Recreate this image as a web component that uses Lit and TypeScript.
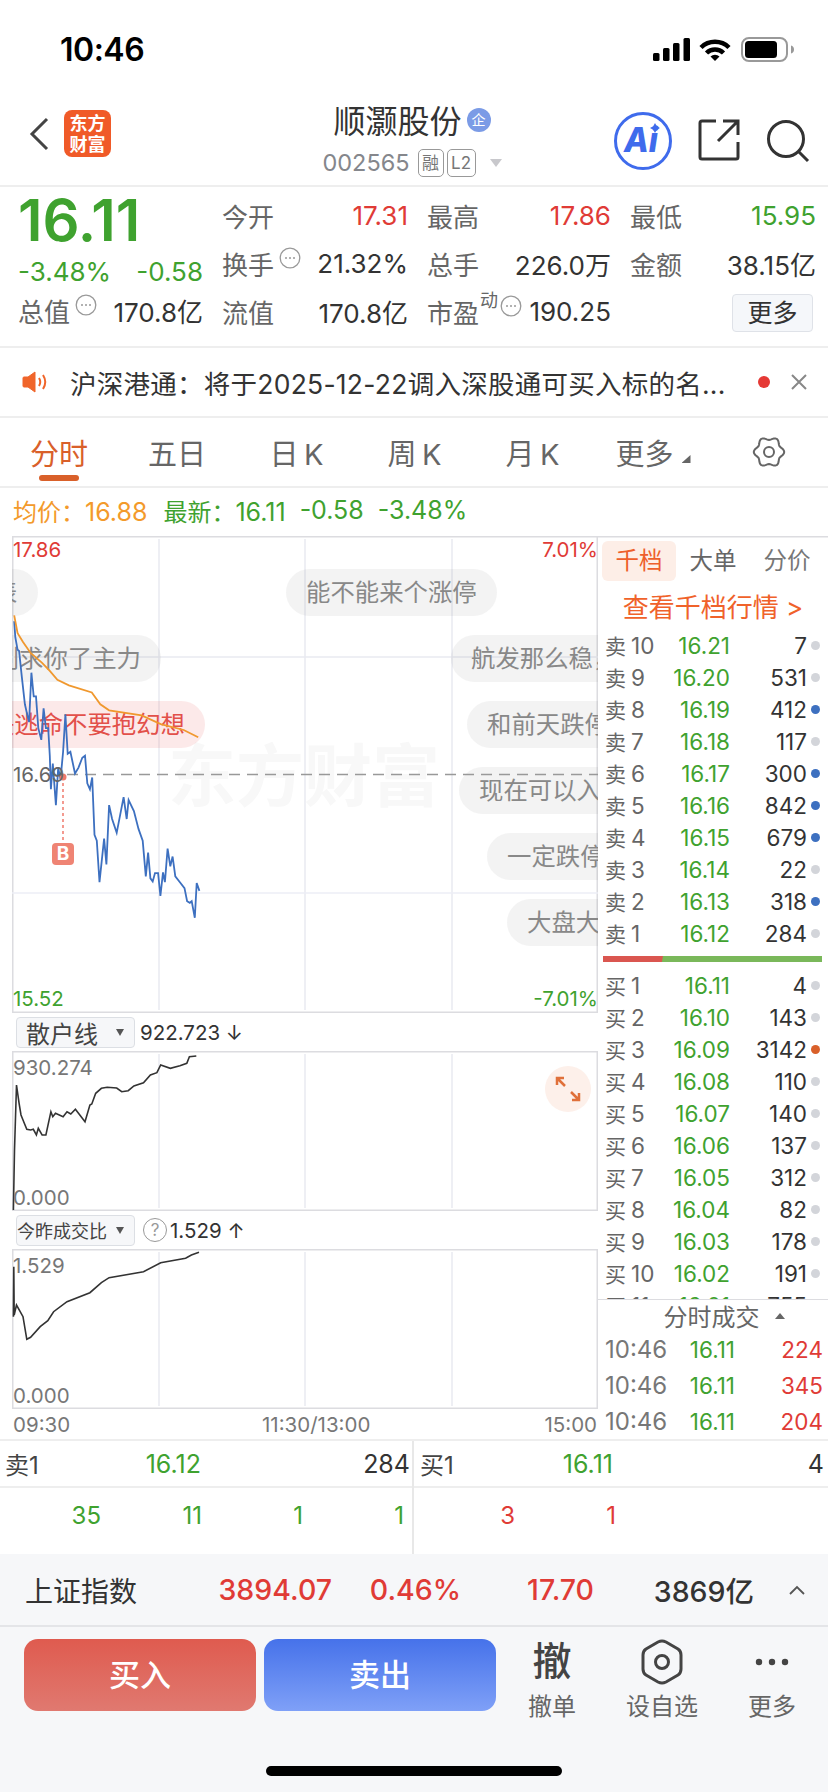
import { LitElement, html, css, svg } from 'lit';
import { customElement } from 'lit/decorators.js';

type Pt = [number, number];

// traced from the reference, in page pixels once mapped
const toPoints = (pts: Pt[], sx: number, sy: number, ox: number, oy: number) =>
  pts.map(([x, y]) => `${(x / sx - ox).toFixed(1)},${(y / sy - oy).toFixed(1)}`).join(' ');

const PRICE: Pt[] = [[37,560],[40,600],[46,632],[50,635],[57,700],[65,770],[72,800],[76,815],[82,690],[88,750],[94,750],[100,830],[108,860],[114,780],[120,830],[126,830],[130,900],[133,985],[138,920],[146,1025],[152,930],[158,960],[165,890],[171,795],[177,895],[184,890],[196,945],[205,930],[215,905],[222,900],[228,970],[235,985],[241,955],[247,1100],[253,1115],[260,1220],[272,1110],[278,1175],[285,1025],[293,1060],[305,1095],[323,1005],[331,1060],[336,1012],[350,1040],[362,1085],[373,1115],[381,1205],[387,1145],[393,1210],[399,1218],[405,1197],[413,1197],[419,1255],[426,1195],[431,1220],[438,1135],[445,1180],[451,1155],[458,1205],[470,1220],[482,1235],[489,1268],[496,1272],[501,1268],[509,1310],[514,1222],[521,1242]];
const AVG: Pt[] = [[37,545],[46,590],[60,612],[80,640],[110,665],[130,685],[150,708],[180,722],[240,740],[262,770],[285,785],[370,798],[420,820],[480,835],[518,853]];
const RETAIL: Pt[] = [[35,630],[38,450],[43,255],[50,310],[55,345],[62,365],[70,388],[80,390],[87,388],[95,405],[100,385],[110,405],[120,405],[133,335],[138,350],[145,340],[165,350],[175,335],[185,342],[197,328],[222,365],[235,315],[240,312],[250,280],[265,265],[280,262],[305,264],[318,275],[335,272],[350,258],[375,248],[393,225],[410,218],[420,195],[445,205],[470,197],[488,190],[495,170],[513,168]];
const RATIO: Pt[] = [[35,950],[36,800],[37,945],[43,915],[60,950],[70,1018],[80,1012],[105,980],[125,962],[140,935],[175,905],[235,878],[265,848],[285,833],[375,815],[420,788],[485,775],[500,765],[520,757]];

const SELL = [['10','16.21','7','g'],['9','16.20','531','g'],['8','16.19','412','b'],['7','16.18','117','g'],['6','16.17','300','b'],['5','16.16','842','b'],['4','16.15','679','b'],['3','16.14','22','g'],['2','16.13','318','b'],['1','16.12','284','g']];
const BUY = [['1','16.11','4','g'],['2','16.10','143','g'],['3','16.09','3142','o'],['4','16.08','110','g'],['5','16.07','140','g'],['6','16.06','137','g'],['7','16.05','312','g'],['8','16.04','82','g'],['9','16.03','178','g'],['10','16.02','191','g'],['11','16.01','755','g']];

// x is the left edge (or right edge with r) and y the top, relative to the chart box
const BUBBLES = [
  { t: '表', r: 25.5, y: 33 },
  { t: '能不能来个涨停', x: 274, y: 33 },
  { t: '别求你了主力', r: 149, y: 99 },
  { t: '航发那么稳，涨停吧', x: 439, y: 99 },
  { t: '快逃命不要抱幻想', r: 193, y: 165, hot: true },
  { t: '和前天跌停一样', x: 455, y: 165 },
  { t: '现在可以入手吗', x: 447, y: 231 },
  { t: '一定跌停的', x: 475, y: 297 },
  { t: '大盘大跌', x: 495, y: 363 },
];

const gearPath = () => {
  const p: string[] = [];
  for (let i = 0; i < 72; i++) {
    const a = (i / 72) * Math.PI * 2;
    const r = 13.6 + 1.6 * Math.cos(6 * a);
    p.push(`${(17 + r * Math.cos(a)).toFixed(2)},${(17 + r * Math.sin(a)).toFixed(2)}`);
  }
  return p.join(' ');
};

@customElement('app-root')
export class AppRoot extends LitElement {
  static styles = css`
    :host {
      display: block;
      width: 828px;
      height: 1792px;
      background: #fff;
      color: #333;
      font-family: Inter, 'Noto Sans CJK SC', sans-serif;
      overflow: hidden;
    }
    .page { display: flex; flex-direction: column; height: 1792px; }
    svg { display: block; flex: none; }

    .status { height: 82px; flex: none; display: flex; justify-content: space-between; padding: 36px 34px 0 60px; box-sizing: border-box; }
    .clock { font-weight: 600; font-size: 32px; line-height: 26px; margin-top: 1px; color: #000; letter-spacing: -0.5px; }

    .header { height: 103px; flex: none; display: grid; grid-template-columns: 262px 300px 1fr; border-bottom: 2px solid #eee; }
    .head-left { display: flex; align-items: center; padding: 0 0 0 29px; gap: 15px; }
    .logo { width: 47px; height: 47px; border-radius: 8px; background: #f05a28; color: #fff; font-weight: 700; font-size: 18px; line-height: 21px; text-align: center; display: flex; align-items: center; justify-content: center; }
    .head-mid { display: flex; flex-direction: column; align-items: center; padding-top: 17px; }
    .title { display: flex; align-items: center; gap: 5px; font-size: 32px; line-height: 46px; height: 46px; color: #333; }
    .qi { width: 24px; height: 24px; border-radius: 50%; background: #7b9be6; color: #fff; font-size: 14px; line-height: 24px; text-align: center; margin-bottom: 4px; }
    .code { display: flex; align-items: center; margin-top: 3px; color: #85878c; font-size: 23.5px; line-height: 30px; }
    .tag { border: 1px solid #999; border-radius: 5px; height: 28px; box-sizing: border-box; font-size: 17px; line-height: 26px; text-align: center; color: #777; }
    .tag.rong { width: 26px; margin-left: 8px; }
    .tag.l2 { width: 29px; margin-left: 3px; }
    .caret { width: 0; height: 0; border: 6.5px solid transparent; border-top: 8px solid #c8c8cc; border-bottom: 0; margin-left: 14px; }
    .head-right { display: flex; align-items: flex-start; padding: 29px 0 0 51px; }

    .quote { height: 159px; flex: none; display: flex; border-bottom: 2px solid #eee; }
    .q-left { width: 222px; padding-left: 18px; box-sizing: border-box; flex: none; }
    .big { font-size: 58px; line-height: 66px; height: 66px; font-weight: 600; color: #3fa22f; }
    .chg { display: flex; justify-content: space-between; width: 185px; height: 38px; line-height: 38px; font-size: 26px; color: #3fa22f; }
    .cap { width: 185px; height: 38px; }
    .q-grid { display: grid; grid-template-columns: 186px 184px 186px; column-gap: 19px; grid-auto-rows: 48px; padding-top: 4px; }
    .cell { display: flex; align-items: center; justify-content: space-between; font-size: 26px; white-space: nowrap; }
    .lbl { display: flex; align-items: center; font-size: 26px; color: #666; }
    .lbl svg { margin: -10px 0 0 5px; }
    .lbl sup { font-size: 18px; line-height: 18px; margin: -20px -3px 0 1px; }
    .red { color: #e03b36; }
    .green { color: #3fa22f; }
    .more-btn { margin: 4px 3px 0 auto; width: 81px; height: 38px; box-sizing: border-box; background: #f5f7fa; border: 1px solid #dfe2e8; border-radius: 4px; font-size: 25px; line-height: 36px; text-align: center; color: #333; }

    .notice { height: 68px; flex: none; display: flex; align-items: center; padding: 0 20px 0 22px; border-bottom: 2px solid #eee; }
    .notice-text { margin-left: 22px; font-size: 26.5px; letter-spacing: 0.25px; white-space: nowrap; color: #333; }
    .notice-dot { width: 12px; height: 12px; border-radius: 50%; background: #e53935; margin-left: auto; flex: none; }
    .notice svg { margin-left: 20px; }

    .tabs { height: 68px; flex: none; display: grid; grid-template-columns: repeat(7, 118px); border-bottom: 2px solid #eee; }
    .tab { position: relative; display: flex; align-items: center; justify-content: center; font-size: 29px; color: #666; gap: 4px; }
    .tab.on { color: #d9602a; }
    .tab.on::after { content: ''; position: absolute; left: 39px; width: 40px; height: 6px; top: 57px; border-radius: 3px; background: #d9602a; }
    .tab-tri { width: 9px; height: 8px; background: #666; clip-path: polygon(100% 0, 100% 100%, 0 100%); margin: 14px 0 0 4px; }
    .tab.kline { padding-left: 3px; }
    .tab.more { padding-left: 8px; }
    .tab.gear { padding-left: 4px; }

    .legend { height: 44px; padding-bottom: 4px; flex: none; display: flex; align-items: center; padding-left: 13px; font-size: 25px; color: #3fa22f; white-space: nowrap; }
    .legend b { font-weight: 400; font-size: 24px; }
    .legend .orange { color: #f39a2b; }
    .legend span { margin-right: 14px; }

    .body { height: 903px; flex: none; display: flex; border-bottom: 2px solid #eee; }
    .charts { width: 586px; margin-left: 12px; flex: none; }
    .box { position: relative; width: 586px; overflow: hidden; box-shadow: inset 0 0 0 1.5px #dcdce0; }
    .box.main { height: 477px; }
    .box.sub { height: 160px; }
    .box svg { position: absolute; left: 0; top: 0; }
    .axis-lbl { position: absolute; font-size: 20.5px; line-height: 28px; white-space: nowrap; color: #777; }
    .axis-lbl.red { color: #e03b36; }
    .axis-lbl.green { color: #3fa22f; }
    .bubble { position: absolute; height: 47px; padding: 0 20px; border-radius: 24px; background: rgba(120, 120, 125, 0.09); color: #888; font-size: 24.4px; line-height: 47px; white-space: nowrap; }
    .bubble.hot { background: rgba(228, 70, 70, 0.12); color: #e2504a; }
    .watermark { position: absolute; left: 156px; top: 192px; font-size: 68px; font-weight: 700; line-height: 96px; color: #f8f8f8; white-space: nowrap; }
    .b-mark { position: absolute; left: 40px; top: 307px; width: 22px; height: 22px; border-radius: 4px; background: #ef8474; color: #fff; font-size: 19px; font-weight: 700; line-height: 22px; text-align: center; }
    .expand { position: absolute; left: 533px; top: 15px; width: 46px; height: 46px; border-radius: 50%; background: #fdf0ea; display: flex; align-items: center; justify-content: center; }
    .expand svg { position: static; }

    .sub-head { height: 38px; display: flex; align-items: center; padding-left: 4px; font-size: 20.5px; color: #333; white-space: nowrap; }
    .picker { width: 119px; height: 31px; box-sizing: border-box; background: #f6f7f9; border: 1px solid #dcdfe4; border-radius: 4px; display: flex; align-items: center; justify-content: space-between; padding: 0 10px 0 9px; font-size: 24px; color: #444; }
    .picker.small { font-size: 18px; padding: 0 10px 0 0; }
    .picker i { width: 0; height: 0; border: 4.5px solid transparent; border-top: 7px solid #555; border-bottom: 0; }
    .q-mark { width: 24px; height: 24px; box-sizing: border-box; border: 1px solid #999; border-radius: 50%; color: #999; font-size: 17px; line-height: 22px; text-align: center; margin: 0 3px 0 8px; }
    .time-axis { height: 30px; display: flex; align-items: center; padding: 0 1px; font-size: 20.5px; color: #777; }
    .time-axis span:first-child { width: 249px; }
    .time-axis span:last-child { margin-left: auto; }

    .book { width: 230px; flex: none; display: flex; flex-direction: column; box-shadow: inset 0 1.5px 0 #dcdce0; }
    .book-tabs { display: grid; grid-template-columns: 74px 74px 74px; margin: 5px 0 0 4px; height: 40px; font-size: 23.5px; line-height: 40px; text-align: center; color: #666; }
    .book-tabs .on { background: #fdeee7; border-radius: 6px; color: #ee5f2b; }
    .cta { height: 48px; box-sizing: border-box; padding-top: 6px; line-height: 42px; font-size: 26px; text-align: center; color: #f0622a; white-space: nowrap; }
    .levels { height: 671px; overflow: hidden; flex: none; border-bottom: 1.5px solid #dcdce0; box-sizing: border-box; }
    .lv { display: flex; align-items: center; height: 32px; padding-left: 7px; white-space: nowrap; font-size: 22.5px; }
    .lv .side { width: 58px; color: #666; font-size: 22.5px; }
    .lv .side b { font-weight: 400; font-size: 21px; margin-right: 5px; }
    .lv .px { width: 67px; text-align: right; color: #3fa22f; }
    .lv .vol { width: 77px; text-align: right; color: #333; }
    .lv .dot { width: 9px; height: 9px; border-radius: 50%; margin-left: 4px; }
    .dot.g { background: #d3d5da; }
    .dot.b { background: #3d70c0; }
    .dot.o { background: #d9602a; }
    .ratio { height: 20px; display: flex; align-items: center; padding-left: 5px; }
    .ratio div { width: 219px; height: 6px; background: linear-gradient(100deg, #da5650 27%, #7ab85a 27.5%); }
    .deal-head { height: 31px; flex: none; display: flex; align-items: center; justify-content: center; gap: 15px; font-size: 24px; color: #666; padding-left: 22px; }
    .deal-head i { width: 0; height: 0; border: 5px solid transparent; border-bottom: 6px solid #666; border-top: 0; }
    .deal { display: flex; align-items: center; height: 36px; padding-left: 7px; font-size: 22.5px; color: #777; }
    .deal .t { width: 68px; font-size: 24px; }
    .deal .px { width: 62px; text-align: right; color: #3fa22f; }
    .deal .vol { width: 88px; text-align: right; color: #e03b36; }

    .pair { display: flex; flex: none; height: 113px; }
    .half { width: 414px; flex: none; box-sizing: border-box; }
    .half.l { border-right: 2px solid #e8e8e8; }
    .top-row { height: 47px; box-sizing: border-box; border-bottom: 2px solid #eee; display: grid; font-size: 25px; align-items: center; }
    .l .top-row { grid-template-columns: 134px 62px 209px; padding-left: 5px; }
    .r .top-row { grid-template-columns: 139px 54px 211px; padding-left: 6px; }
    .top-row .c { font-size: 24px; color: #444; }
    .tr { text-align: right; }
    .bars { display: grid; grid-template-columns: repeat(4, 101px); height: 56px; line-height: 56px; font-size: 24px; text-align: right; }

    .index { height: 71px; flex: none; display: grid; grid-template-columns: 112px 195px 129px 133px 160px 1fr; align-items: center; padding-left: 25px; background: #f6f7f9; border-bottom: 2px solid #e4e5e8; font-size: 28.5px; font-weight: 500; }
    .index .name { font-size: 28px; font-weight: 400; color: #333; white-space: nowrap; }
    .index svg { margin-left: 35px; }

    .foot { flex: 1; background: #f6f7f9; display: flex; flex-direction: column; }
    .actions { display: flex; padding: 12px 0 0 24px; }
    .trade { width: 232px; height: 72px; margin-right: 8px; border-radius: 14px; color: #fff; font-size: 31px; font-weight: 500; line-height: 72px; text-align: center; }
    .trade.buy { background: linear-gradient(#df5b4f, #e07970); }
    .trade.sell { background: linear-gradient(#4672ea, #7fa0f7); margin-right: 1px; }
    .act { width: 110px; display: flex; flex-direction: column; align-items: center; }
    .act .ic { height: 46px; display: flex; align-items: center; justify-content: center; font-size: 39px; font-weight: 500; color: #444; }
    .act .ic.glyph { padding-bottom: 8px; box-sizing: border-box; }
    .act .txt { font-size: 24px; line-height: 40px; margin-top: 2px; color: #666; }
    .home { width: 296px; height: 10px; border-radius: 5px; background: #000; margin: auto 0 16px 266px; }
  `;

  private dots() {
    return html`<svg width="22" height="22" viewBox="0 0 22 22">
      <circle cx="11" cy="11" r="9.8" fill="none" stroke="#999" stroke-width="1.3" />
      <circle cx="7" cy="11" r="1" fill="#999" /><circle cx="11" cy="11" r="1" fill="#999" /><circle cx="15" cy="11" r="1" fill="#999" />
    </svg>`;
  }

  private grid(h: number) {
    return [147, 293, 440].map((x) => svg`<line x1=${x} x2=${x} y1="3" y2=${h - 3} stroke="#e9eaf1" stroke-width="1.5" />`);
  }

  private renderMain() {
    return html`<div class="box main">
      <svg width="586" height="477">
        ${this.grid(477)}
        <line x1="0" x2="586" y1="121" y2="121" stroke="#e9eaf1" stroke-width="1.5" />
        <line x1="0" x2="586" y1="357" y2="357" stroke="#eceef6" stroke-width="1.5" />
      </svg>
      <div class="watermark">东方财富</div>
      ${BUBBLES.map(
        (b) => html`<div
          class="bubble ${b.hot ? 'hot' : ''}"
          style="top:${b.y}px;${b.x !== undefined ? `left:${b.x}px` : `right:${586 - (b.r as number)}px`}"
        >${b.t}</div>`
      )}
      <svg width="586" height="477">
        <line x1="55" x2="586" y1="238.5" y2="238.5" stroke="#999" stroke-width="1.5" stroke-dasharray="11 7" />
        <line x1="51" x2="51" y1="241" y2="306" stroke="#ef7a6c" stroke-width="1.5" stroke-dasharray="3 3" />
        <polyline points=${toPoints(PRICE, 2.613, 2.53, 12, 136)} fill="none" stroke="#3d70c0" stroke-width="1.8" />
        <polyline points=${toPoints(AVG, 2.613, 2.53, 12, 136)} fill="none" stroke="#f0982e" stroke-width="1.8" />
        <circle cx="51" cy="241" r="3.5" fill="#ef7a6c" />
      </svg>
      <div class="b-mark">B</div>
      <div class="axis-lbl red" style="left:1px;top:0">17.86</div>
      <div class="axis-lbl red" style="right:0;top:0">7.01%</div>
      <div class="axis-lbl" style="left:1px;top:225px;color:#666">16.69</div>
      <div class="axis-lbl green" style="left:1px;bottom:0">15.52</div>
      <div class="axis-lbl green" style="right:0;bottom:0">-7.01%</div>
    </div>`;
  }

  private renderLevel(side: string, r: string[]) {
    return html`<div class="lv">
      <div class="side"><b>${side}</b>${r[0]}</div>
      <div class="px">${r[1]}</div>
      <div class="vol">${r[2]}</div>
      <div class="dot ${r[3]}"></div>
    </div>`;
  }

  private renderBook() {
    return html`<div class="book">
      <div class="book-tabs"><div class="on">千档</div><div>大单</div><div style="color:#777">分价</div></div>
      <div class="cta">查看千档行情 &gt;</div>
      <div class="levels">
        ${SELL.map((r) => this.renderLevel('卖', r))}
        <div class="ratio"><div></div></div>
        ${BUY.map((r) => this.renderLevel('买', r))}
      </div>
      <div class="deal-head">分时成交<i></i></div>
      ${['224', '345', '204'].map(
        (v) => html`<div class="deal"><div class="t">10:46</div><div class="px">16.11</div><div class="vol">${v}</div></div>`
      )}
    </div>`;
  }

  render() {
    return html`<div class="page">
      <div class="status">
        <div class="clock">10:46</div>
        <svg width="141" height="26" viewBox="0 0 141 26">
          <rect x="0" y="17" width="6.5" height="8" rx="1.5" /><rect x="10" y="12" width="6.5" height="13" rx="1.5" />
          <rect x="20" y="7" width="6.5" height="18" rx="1.5" /><rect x="30.5" y="2" width="6.5" height="23" rx="1.5" />
          <path d="M48 11.5A20 20 0 0 1 76 11.5M53.5 17A12 12 0 0 1 70.5 17" fill="none" stroke="#000" stroke-width="4.5" />
          <path d="M57.5 20.5L62 25L66.5 20.5A6.4 6.4 0 0 0 57.5 20.5Z" />
          <rect x="89" y="2" width="45" height="23" rx="7" fill="none" stroke="#999" stroke-width="2" />
          <rect x="92" y="5" width="32" height="17" rx="3.5" />
          <path d="M138 9.5C140 10 141 11.5 141 13.5S140 17 138 17.5Z" fill="#999" />
        </svg>
      </div>

      <div class="header">
        <div class="head-left">
          <svg width="20" height="34" viewBox="0 0 20 34"><path d="M18 2L3 17L18 32" fill="none" stroke="#444" stroke-width="3" /></svg>
          <div class="logo">东方<br />财富</div>
        </div>
        <div class="head-mid">
          <div class="title">顺灏股份<div class="qi">企</div></div>
          <div class="code">002565<div class="tag rong">融</div><div class="tag l2">L2</div><div class="caret"></div></div>
        </div>
        <div class="head-right">
          <svg width="60" height="60" viewBox="0 0 60 60">
            <circle cx="30" cy="30" r="27.5" fill="none" stroke="#3f6bec" stroke-width="3" />
            <text x="11" y="41" font-family="Inter" font-weight="800" font-style="italic" font-size="34" fill="#3f6bec" textLength="34" lengthAdjust="spacingAndGlyphs">Ai</text>
            <path d="M42 12L43.8 15.2L47 17L43.8 18.8L42 22L40.2 18.8L37 17L40.2 15.2Z" fill="#3f6bec" />
          </svg>
          <svg width="42" height="42" viewBox="0 0 42 42" style="margin:8px 0 0 25px">
            <path d="M18 2H4Q2 2 2 4V38Q2 40 4 40H38Q40 40 40 38V23M20 22L39 3M25 2H40V16" fill="none" stroke="#333" stroke-width="3" />
          </svg>
          <svg width="44" height="44" viewBox="0 0 44 44" style="margin:8px 0 0 26px">
            <circle cx="20" cy="20" r="17.5" fill="none" stroke="#333" stroke-width="3" />
            <path d="M32.5 32.5L42 42" stroke="#333" stroke-width="3" />
          </svg>
        </div>
      </div>

      <div class="quote">
        <div class="q-left">
          <div class="big">16.11</div>
          <div class="chg"><span>-3.48%</span><span>-0.58</span></div>
          <div class="cell cap"><div class="lbl">总值${this.dots()}</div><span>170.8亿</span></div>
        </div>
        <div class="q-grid">
          <div class="cell"><div class="lbl">今开</div><span class="red">17.31</span></div>
          <div class="cell"><div class="lbl">最高</div><span class="red">17.86</span></div>
          <div class="cell"><div class="lbl">最低</div><span class="green">15.95</span></div>
          <div class="cell"><div class="lbl">换手${this.dots()}</div><span>21.32%</span></div>
          <div class="cell"><div class="lbl">总手</div><span>226.0万</span></div>
          <div class="cell"><div class="lbl">金额</div><span>38.15亿</span></div>
          <div class="cell"><div class="lbl">流值</div><span>170.8亿</span></div>
          <div class="cell"><div class="lbl">市盈<sup>动</sup>${this.dots()}</div><span>190.25</span></div>
          <div class="cell"><div class="more-btn">更多</div></div>
        </div>
      </div>

      <div class="notice">
        <svg width="26" height="22" viewBox="0 0 26 22" style="margin:0">
          <path d="M1 7Q1 6 2 6H6L13 1V21L6 16H2Q1 16 1 15Z" fill="#f0652a" stroke="#f0652a" stroke-linejoin="round" />
          <path d="M17 7Q19.5 11 17 15M21 4Q25.5 11 21 18" fill="none" stroke="#f0652a" stroke-width="2" />
        </svg>
        <div class="notice-text">沪深港通：将于2025-12-22调入深股通可买入标的名...</div>
        <div class="notice-dot"></div>
        <svg width="18" height="18" viewBox="0 0 18 18"><path d="M2 2L16 16M16 2L2 16" stroke="#888" stroke-width="2" /></svg>
      </div>

      <div class="tabs">
        <div class="tab on">分时</div>
        <div class="tab">五日</div>
        <div class="tab kline">日\u2009K</div>
        <div class="tab kline">周\u2009K</div>
        <div class="tab kline">月\u2009K</div>
        <div class="tab more">更多<div class="tab-tri"></div></div>
        <div class="tab gear">
          <svg width="34" height="34" viewBox="0 0 34 34">
            <polygon points=${gearPath()} fill="none" stroke="#666" stroke-width="2" stroke-linejoin="round" />
            <circle cx="17" cy="17" r="5" fill="none" stroke="#666" stroke-width="2" />
          </svg>
        </div>
      </div>

      <div class="legend">
        <span class="orange" style="margin-right:16px"><b>均价：</b>16.88</span>
        <span><b>最新：</b>16.11</span><span>-0.58</span><span>-3.48%</span>
      </div>

      <div class="body">
        <div class="charts">
          ${this.renderMain()}
          <div class="sub-head"><div class="picker">散户线<i></i></div><span style="margin-left:5px">922.723 ↓</span></div>
          <div class="box sub">
            <svg width="586" height="160">
              ${this.grid(160)}
              <polyline points=${toPoints(RETAIL, 2.613, 3, 12, 51)} fill="none" stroke="#333" stroke-width="1.6" />
            </svg>
            <div class="axis-lbl" style="left:1px;top:3px">930.274</div>
            <div class="axis-lbl" style="left:1px;bottom:-1px">0.000</div>
            <div class="expand">
              <svg width="26" height="26" viewBox="0 0 26 26">
                <path d="M2 9V2H9M2 2L10 10M24 17V24H17M24 24L16 16" fill="none" stroke="#e0703a" stroke-width="2.5" />
              </svg>
            </div>
          </div>
          <div class="sub-head"><div class="picker small">今昨成交比<i></i></div><div class="q-mark">?</div>1.529 ↑</div>
          <div class="box sub">
            <svg width="586" height="160">
              ${this.grid(160)}
              <polyline points=${toPoints(RATIO, 2.613, 3, 12, 249)} fill="none" stroke="#333" stroke-width="1.6" />
            </svg>
            <div class="axis-lbl" style="left:1px;top:3px">1.529</div>
            <div class="axis-lbl" style="left:1px;bottom:-1px">0.000</div>
          </div>
          <div class="time-axis"><span>09:30</span><span>11:30/13:00</span><span>15:00</span></div>
        </div>
        ${this.renderBook()}
      </div>

      <div class="pair">
        <div class="half l">
          <div class="top-row"><div class="c">卖1</div><div class="green tr">16.12</div><div class="tr">284</div></div>
          <div class="bars green"><div>35</div><div>11</div><div>1</div><div>1</div></div>
        </div>
        <div class="half r">
          <div class="top-row"><div class="c">买1</div><div class="green tr">16.11</div><div class="tr">4</div></div>
          <div class="bars red"><div>3</div><div>1</div></div>
        </div>
      </div>

      <div class="index">
        <div class="name">上证指数</div>
        <div class="red tr">3894.07</div>
        <div class="red tr">0.46%</div>
        <div class="red tr">17.70</div>
        <div class="tr">3869亿</div>
        <svg width="16" height="10" viewBox="0 0 16 10"><path d="M1 9L8 2L15 9" fill="none" stroke="#555" stroke-width="1.8" /></svg>
      </div>

      <div class="foot">
        <div class="actions">
          <div class="trade buy">买入</div>
          <div class="trade sell">卖出</div>
          <div class="act"><div class="ic glyph">撤</div><div class="txt">撤单</div></div>
          <div class="act">
            <div class="ic">
              <svg width="42" height="46" viewBox="0 0 42 46">
                <path d="M17 3Q21 1 25 3L37 10Q40 12 40 16V30Q40 34 37 36L25 43Q21 45 17 43L5 36Q2 34 2 30V16Q2 12 5 10Z" fill="none" stroke="#444" stroke-width="3" />
                <circle cx="21" cy="23" r="6.5" fill="none" stroke="#444" stroke-width="3" />
              </svg>
            </div>
            <div class="txt">设自选</div>
          </div>
          <div class="act">
            <div class="ic">
              <svg width="34" height="8" viewBox="0 0 34 8"><circle cx="4" cy="4" r="3.2" fill="#444" /><circle cx="17" cy="4" r="3.2" fill="#444" /><circle cx="30" cy="4" r="3.2" fill="#444" /></svg>
            </div>
            <div class="txt">更多</div>
          </div>
        </div>
        <div class="home"></div>
      </div>
    </div>`;
  }
}
